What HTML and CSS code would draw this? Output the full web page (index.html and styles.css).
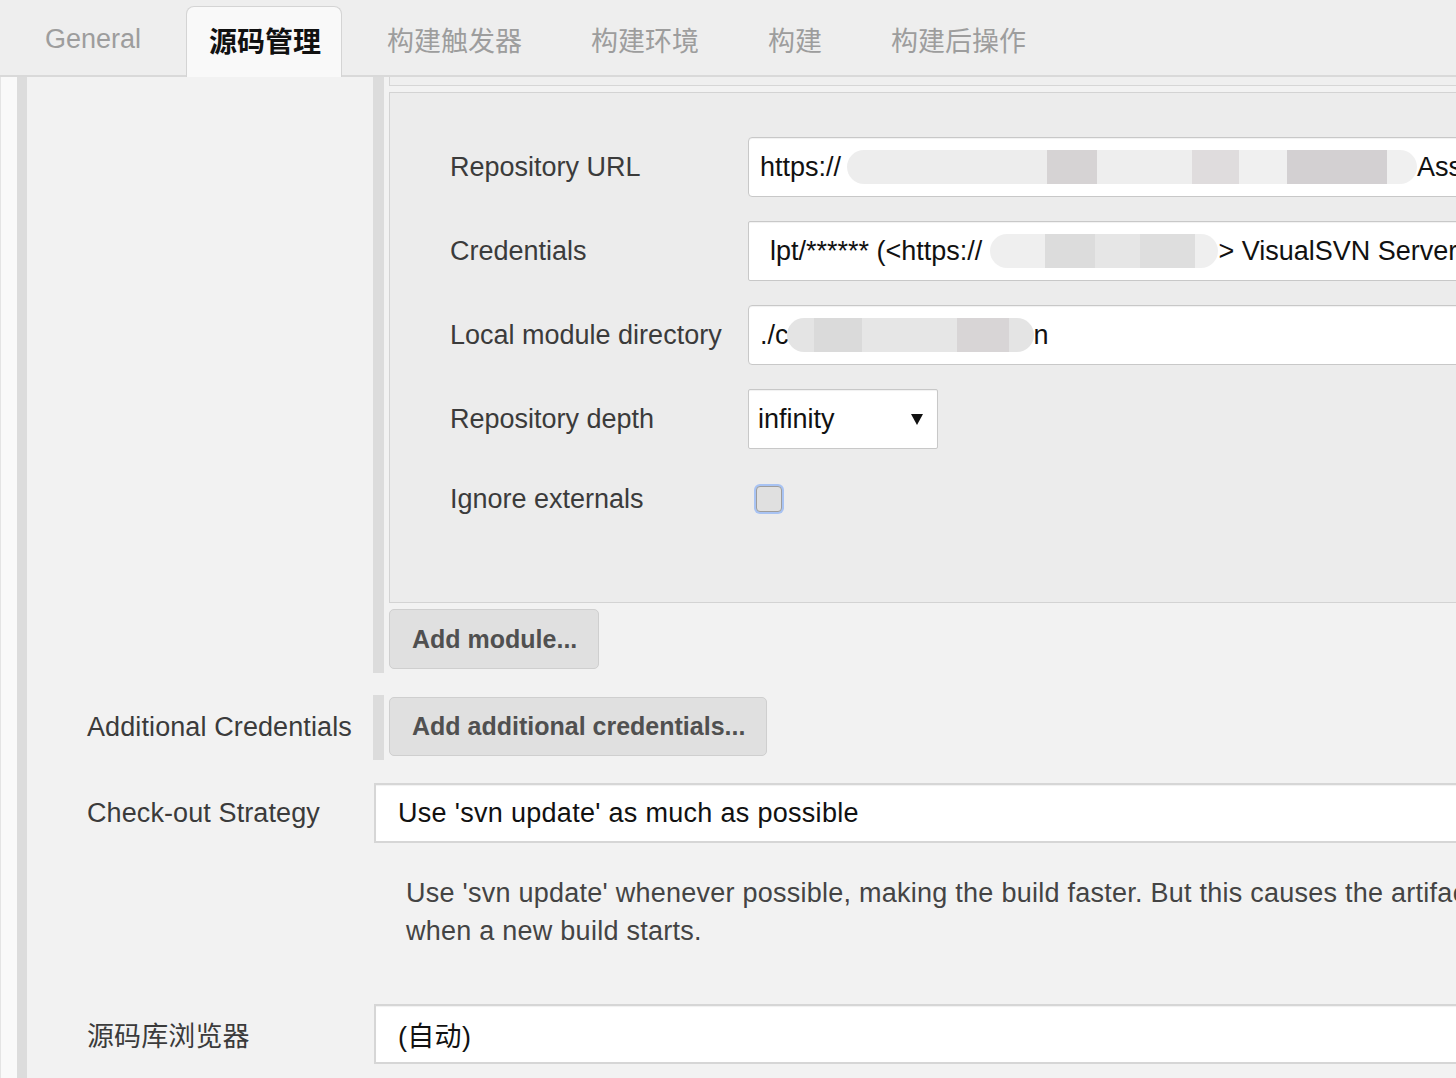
FILE: index.html
```html
<!DOCTYPE html>
<html lang="zh">
<head>
<meta charset="utf-8">
<title>Jenkins 源码管理</title>
<link rel="stylesheet" href="styles.css">
</head>
<body>
<div class="tabbar">
  <div class="tab">General</div>
  <div class="tab active">源码管理</div>
  <div class="tab">构建触发器</div>
  <div class="tab">构建环境</div>
  <div class="tab">构建</div>
  <div class="tab">构建后操作</div>
</div>
<div class="page">
  <div class="strip"></div>
  <div class="rail"></div>
  <div class="form">
    <div class="row">
      <div class="label"></div>
      <div class="content chunk">
        <div class="chunk-bar"></div>
        <div class="chunk-body">
          <div class="prev-box"></div>
          <div class="module-box">
            <div class="flabel">Repository URL</div>
            <div class="input">https://<span class="redact redact-url"></span><span>Assets/trunk</span></div>
            <div class="flabel">Credentials</div>
            <div class="input input-cred"><span>lpt/****** (&lt;https://</span><span class="redact redact-cred"></span><span>&gt; VisualSVN Server</span></div>
            <div class="flabel">Local module directory</div>
            <div class="input">./c<span class="redact redact-dir"></span>n</div>
            <div class="flabel">Repository depth</div>
            <div class="input select-small"><span>infinity</span><svg class="arrow" width="12" height="11" viewBox="0 0 12 11"><path d="M0 0 H12 L6 11 Z" fill="#111"/></svg></div>
            <div class="flabel">Ignore externals</div>
            <div class="check-cell"><div class="checkbox"></div></div>
          </div>
          <div class="btn btn-module">Add module...</div>
        </div>
      </div>
    </div>
    <div class="row row-cred">
      <div class="label">Additional Credentials</div>
      <div class="content chunk">
        <div class="chunk-bar"></div>
        <div class="chunk-body chunk-body-cred">
          <div class="btn btn-cred">Add additional credentials...</div>
        </div>
      </div>
    </div>
    <div class="row row-strategy">
      <div class="label">Check-out Strategy</div>
      <div class="content">
        <div class="input select-wide">Use 'svn update' as much as possible</div>
      </div>
    </div>
    <div class="row">
      <div class="label"></div>
      <div class="content help">Use 'svn update' whenever possible, making the build faster. But this causes the artifacts from the previous build to remain<br>when a new build starts.</div>
    </div>
    <div class="row row-browser">
      <div class="label">源码库浏览器</div>
      <div class="content">
        <div class="input select-wide">(自动)</div>
      </div>
    </div>
  </div>
</div>
</body>
</html>
```
FILE: styles.css
```css
html, body {
  margin: 0;
  padding: 0;
  overflow: hidden;
}
body {
  width: 1700px;
  background: #f2f2f2;
  font-family: "Liberation Sans", Arial, "Noto Sans CJK SC", sans-serif;
  font-size: 27px;
  color: #3b3b3b;
}

/* tabs */
.tabbar {
  display: flex;
  align-items: flex-end;
  height: 75px;
  padding-left: 21px;
  background: #eeeeee;
  border-bottom: 2px solid #d9d9d9;
}
.tab {
  height: 71px;
  margin-bottom: -2px;
  margin-right: 21px;
  padding: 0 23px 5px;
  box-sizing: border-box;
  display: flex;
  align-items: center;
  color: #9d9d9d;
  font-size: 27px;
  border: 1px solid transparent;
  border-bottom: none;
}
.tab.active {
  background: #f9f9f9;
  border-color: #d4d4d4;
  border-radius: 8px 8px 0 0;
  color: #111;
  font-weight: 700;
  font-size: 28px;
  padding-left: 22px;
  padding-right: 20px;
}

/* page frame */
.page {
  display: flex;
  min-height: 1001px;
}
.strip {
  width: 16px;
  background: #f9f9f9;
  border-left: 1px solid #e4e4e4;
  flex: none;
}
.rail {
  width: 10px;
  background: #dcdcdc;
  flex: none;
}
.form {
  flex: 1;
  min-width: 0;
}

.row {
  display: flex;
}
.label {
  width: 346px;
  flex: none;
  box-sizing: border-box;
  padding-left: 60px;
  display: flex;
  align-items: center;
  color: #3b3b3b;
  letter-spacing: 0.1px;
}
.content {
  flex: 1;
  min-width: 0;
}

/* repeated chunk */
.chunk {
  display: flex;
}
.chunk-bar {
  width: 11px;
  flex: none;
  margin-right: 5px;
  background: #dcdcdc;
}
.chunk-body {
  flex: 1;
  min-width: 0;
  padding-bottom: 4px;
}
.prev-box {
  height: 8px;
  background: #efefef;
  border-left: 1px solid #d6d6d6;
  border-bottom: 1px solid #d6d6d6;
}
.module-box {
  margin-top: 6px;
  background: #ececec;
  border: 1px solid #d3d3d3;
  padding: 44px 0 77px 60px;
  display: grid;
  grid-template-columns: 298px 1fr;
  grid-template-rows: 60px 60px 60px 60px 52px;
  row-gap: 24px;
}
.flabel {
  align-self: center;
  white-space: nowrap;
  color: #3b3b3b;
}

/* inputs */
.input {
  height: 60px;
  box-sizing: border-box;
  background: #fff;
  border: 1px solid #c8c8c8;
  border-radius: 4px;
  box-shadow: inset 0 1px 1px rgba(0, 0, 0, 0.06);
  display: flex;
  align-items: center;
  padding-left: 11px;
  color: #111;
  white-space: pre;
  overflow: hidden;
}
.input-cred {
  padding-left: 21px;
  border-radius: 2px;
}
.select-small {
  width: 190px;
  padding-left: 9px;
  padding-right: 14px;
  justify-content: space-between;
  border-radius: 2px;
}
.arrow {
  display: block;
  flex: none;
}
.select-wide {
  border-radius: 0;
  border: 2px solid #d6d6d6;
  padding-left: 22px;
  margin-left: 1px;
  letter-spacing: 0.3px;
}

/* redaction blurs */
.redact {
  display: inline-block;
  flex: none;
  height: 34px;
  border-radius: 17px;
  filter: blur(0.6px);
}
.redact-url {
  width: 570px;
  margin-left: 6px;
  background: linear-gradient(90deg,
    #ededed 0, #ededed 200px,
    #d6d3d4 200px, #d6d3d4 250px,
    #eeeeee 250px, #eeeeee 345px,
    #dfdcdd 345px, #dfdcdd 392px,
    #f0f0f0 392px, #f0f0f0 440px,
    #d3d0d2 440px, #d3d0d2 540px,
    #f0f0f0 540px);
}
.redact-cred {
  width: 228px;
  margin-left: 8px;
  background: linear-gradient(90deg,
    #efefef 0, #efefef 55px,
    #dcdcdc 55px, #dcdcdc 105px,
    #e6e6e6 105px, #e6e6e6 150px,
    #dedede 150px, #dedede 205px,
    #efefef 205px);
}
.redact-dir {
  width: 247px;
  margin-left: -2px;
  background: linear-gradient(90deg,
    #e4e4e4 0, #e4e4e4 27px,
    #dadada 27px, #dadada 75px,
    #e6e6e6 75px, #e6e6e6 170px,
    #d8d5d6 170px, #d8d5d6 222px,
    #e4e4e4 222px);
}

/* checkbox */
.check-cell {
  display: flex;
  align-items: center;
  padding-left: 8px;
}
.checkbox {
  width: 24px;
  height: 24px;
  background: #e0e0e0;
  border: 1px solid #9d9d9d;
  border-radius: 4px;
  box-shadow: 0 0 0 2px #a8c3f3;
}

/* buttons */
.btn {
  display: inline-flex;
  align-items: center;
  height: 60px;
  box-sizing: border-box;
  padding: 0 21px 0 22px;
  background: #e0e0e0;
  border: 1px solid #cfcfcf;
  border-radius: 5px;
  font-weight: 700;
  font-size: 25px;
  color: #505050;
  white-space: nowrap;
}
.btn-module {
  margin-top: 6px;
}

.row-cred {
  margin-top: 22px;
}
.chunk-body-cred {
  padding-top: 2px;
  padding-bottom: 4px;
}
.btn-cred {
  height: 59px;
}

.row-strategy {
  margin-top: 23px;
}
.help {
  padding-left: 33px;
  margin-top: 31px;
  line-height: 38px;
  color: #444;
  white-space: nowrap;
  letter-spacing: 0.25px;
}
.row-browser {
  margin-top: 54px;
}
```
